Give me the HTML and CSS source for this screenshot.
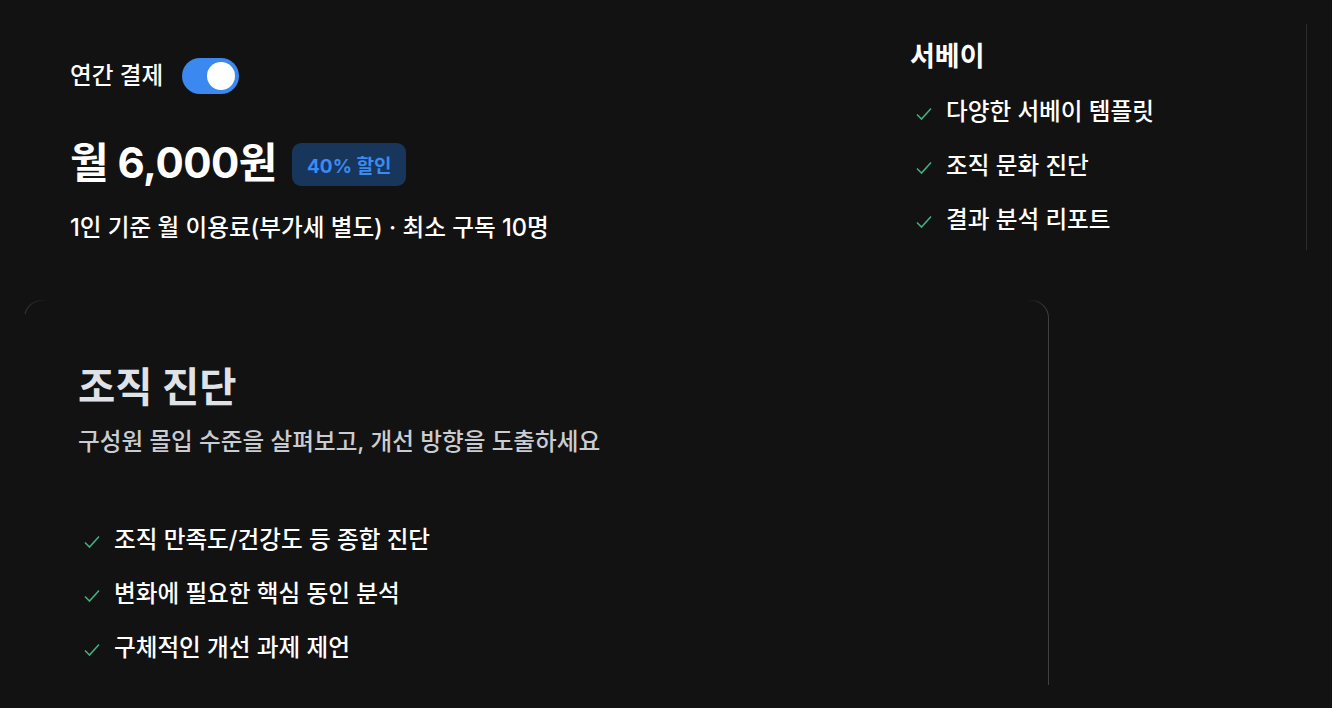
FILE: index.html
```html
<!DOCTYPE html>
<html lang="ko">
<head>
    <meta charset="UTF-8">
    <meta name="viewport" content="width=device-width, initial-scale=1.0">
    <title>요금제 - 조직 진단</title>
    <link rel="stylesheet" href="styles.css">
</head>
<body>
    <div class="page">
        <div class="top-row">
            <section class="pricing">
                <div class="billing">
                    <span class="billing-label">연간 결제</span>
                    <button class="toggle is-on" aria-label="연간 결제"><span class="knob"></span></button>
                </div>
                <div class="price-row">
                    <span class="price">월 6,000원</span>
                    <span class="badge">40% 할인</span>
                </div>
                <p class="price-note">1인 기준 월 이용료(부가세 별도) · 최소 구독 10명</p>
            </section>

            <aside class="features">
                <h3 class="features-title">서베이</h3>
                <ul class="check-list">
                    <li><svg class="check" viewBox="0 0 16 14"><path d="M1 7.5 L5.5 12 L15 1.5"/></svg>다양한 서베이 템플릿</li>
                    <li><svg class="check" viewBox="0 0 16 14"><path d="M1 7.5 L5.5 12 L15 1.5"/></svg>조직 문화 진단</li>
                    <li><svg class="check" viewBox="0 0 16 14"><path d="M1 7.5 L5.5 12 L15 1.5"/></svg>결과 분석 리포트</li>
                </ul>
            </aside>
        </div>

        <section class="plan-card">
            <h2 class="plan-title">조직 진단</h2>
            <p class="plan-desc">구성원 몰입 수준을 살펴보고, 개선 방향을 도출하세요</p>
            <ul class="check-list plan-list">
                <li><svg class="check" viewBox="0 0 16 14"><path d="M1 7.5 L5.5 12 L15 1.5"/></svg>조직 만족도/건강도 등 종합 진단</li>
                <li><svg class="check" viewBox="0 0 16 14"><path d="M1 7.5 L5.5 12 L15 1.5"/></svg>변화에 필요한 핵심 동인 분석</li>
                <li><svg class="check" viewBox="0 0 16 14"><path d="M1 7.5 L5.5 12 L15 1.5"/></svg>구체적인 개선 과제 제언</li>
            </ul>
        </section>
    </div>
</body>
</html>
```

FILE: styles.css
```css
* {
    box-sizing: border-box;
}

body {
    margin: 0;
    background-color: #121212;
    color: #ffffff;
    font-family: Inter, "Noto Sans CJK KR", sans-serif;
    font-weight: 500;
    overflow: hidden;
}

.page {
    width: 1332px;
    height: 708px;
    padding: 24px 25px 0 24px;
}

.top-row {
    display: flex;
}

.pricing {
    flex: 1;
    padding: 34px 0 0 46px;
}

.billing {
    display: flex;
    align-items: center;
    gap: 19px;
    height: 36px;
}

.billing-label {
    font-size: 23.6px;
    line-height: 32px;
}

.toggle {
    position: relative;
    width: 57px;
    height: 36px;
    border: none;
    border-radius: 18px;
    background-color: #3a88f0;
    padding: 0;
    cursor: pointer;
}

.toggle .knob {
    position: absolute;
    top: 4px;
    right: 4px;
    width: 28px;
    height: 28px;
    border-radius: 50%;
    background-color: #ffffff;
}

.price-row {
    display: flex;
    align-items: center;
    gap: 15px;
    height: 43px;
    margin-top: 49px;
}

.price {
    font-size: 42px;
    font-weight: 700;
    line-height: 48px;
    letter-spacing: -0.5px;
    margin-top: -3px;
}

.badge {
    display: inline-flex;
    align-items: center;
    height: 43px;
    padding: 0 15px;
    border-radius: 9px;
    background-color: #18355c;
    color: #3a8bf2;
    font-size: 19px;
    font-weight: 700;
}

.price-note {
    margin: 26px 0 0;
    font-size: 23.6px;
    line-height: 32px;
}

.features {
    width: 397px;
    padding: 16px 0 14px 0;
    border-right: 1px solid #2c2c2c;
}

.features-title {
    margin: 0;
    font-size: 27px;
    font-weight: 700;
    line-height: 34px;
}

.check-list {
    list-style: none;
    margin: 22px 0 0;
    padding: 0 0 0 6px;
    display: flex;
    flex-direction: column;
    gap: 22px;
}

.check-list li {
    display: flex;
    align-items: center;
    gap: 14px;
    font-size: 23.6px;
    line-height: 32px;
}

.check {
    width: 16px;
    height: 14px;
    flex-shrink: 0;
    fill: none;
    stroke: #48ab7e;
    stroke-width: 1.6;
    margin-top: 4px;
}

.plan-card {
    width: 1025px;
    height: 385px;
    margin-top: 50px;
    padding: 63px 0 0 53px;
    border: 1px solid transparent;
    border-bottom: 0;
    border-radius: 18px 18px 0 0;
    background:
        linear-gradient(#121212, #121212) left 0 top 14px / 2px 100% no-repeat border-box,
        linear-gradient(#121212, #121212) padding-box,
        linear-gradient(to right, rgba(255, 255, 255, 0.16), rgba(255, 255, 255, 0) 24px, rgba(255, 255, 255, 0) calc(100% - 22px), rgba(255, 255, 255, 0.2)) border-box;
}

.plan-title {
    margin: 0;
    color: #dfe2e7;
    font-size: 40.5px;
    font-weight: 700;
    line-height: 48px;
}

.plan-desc {
    margin: 14px 0 0;
    color: #c9ccd1;
    font-size: 23.6px;
    line-height: 32px;
}

.plan-list {
    margin-top: 66px;
}
```
